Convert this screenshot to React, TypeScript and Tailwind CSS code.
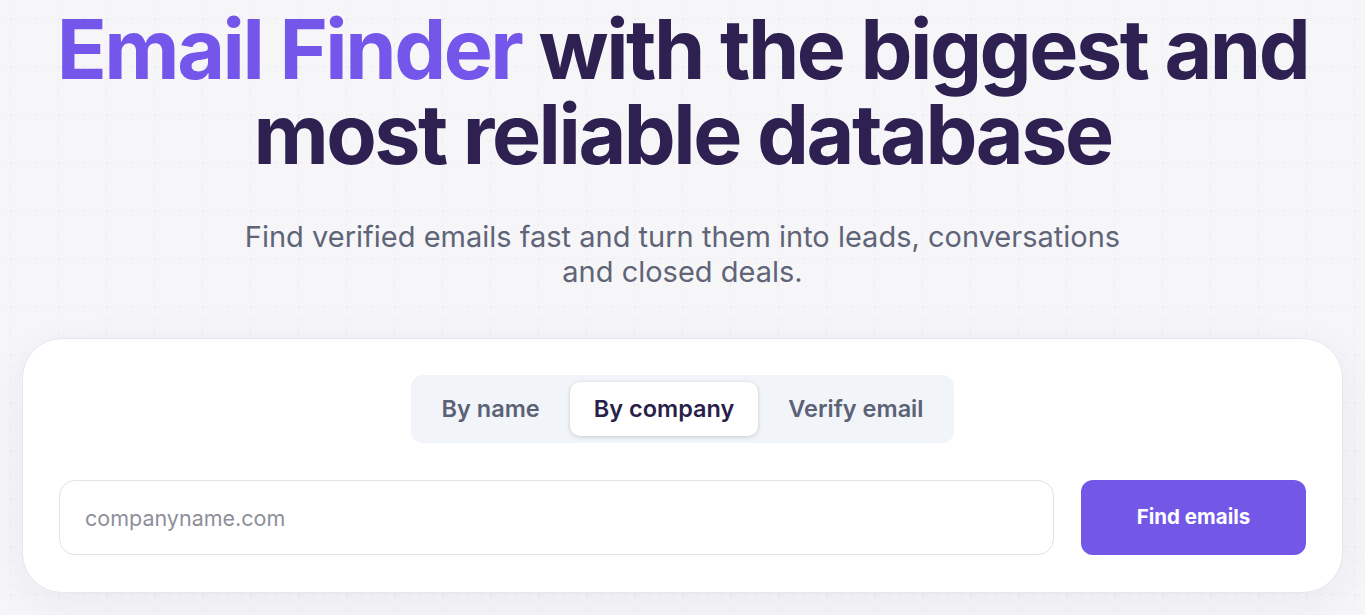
import { useState } from 'react'

const tabs = ['By name', 'By company', 'Verify email']

function GridBackdrop() {
  // faint dashed grid behind the hero
  return (
    <svg className="pointer-events-none absolute inset-0 h-full w-full" aria-hidden="true">
      <defs>
        <pattern id="grid" x="10" y="18" width="48" height="48" patternUnits="userSpaceOnUse">
          <path d="M0 0H48" stroke="#e2e2ef" strokeWidth="1" strokeDasharray="5 7" fill="none" />
          <path d="M0 0V48" stroke="#e2e2ef" strokeWidth="1" strokeDasharray="5 7" fill="none" />
        </pattern>
      </defs>
      <rect width="100%" height="100%" fill="url(#grid)" />
    </svg>
  )
}

export default function App() {
  const [active, setActive] = useState(1)

  return (
    <div
      className="relative min-h-screen overflow-hidden bg-[#f6f6f9]"
      style={{ fontFamily: 'Inter, "Noto Sans", sans-serif' }}
    >
      <GridBackdrop />
      <div className="relative flex flex-col items-center px-[22px] pt-[7px]">
        <h1 className="text-center text-[82.5px] font-bold leading-[85px] tracking-[-0.03em] text-[#2e2151]">
          <span className="text-[#7457ea]">Email Finder</span> with the biggest and
          <br />
          most reliable database
        </h1>
        <p className="mt-[42px] max-w-[900px] text-center text-[29px] leading-[35px] text-[#5f6577]">
          Find verified emails fast and turn them into leads, conversations and closed deals.
        </p>

        <div className="mt-[49px] flex w-full flex-col items-center gap-[37px] rounded-[40px] border border-[#e6e6ee] bg-white px-9 pt-9 pb-[37px] shadow-[0_10px_40px_rgba(40,30,90,0.06)]">
          <div className="flex gap-[6px] rounded-xl bg-[#f1f4f9] p-[7px]">
            {tabs.map((t, i) => (
              <button
                key={t}
                onClick={() => setActive(i)}
                className={
                  i === active
                    ? 'h-[54px] rounded-[10px] bg-white px-6 text-[23.5px] font-semibold text-[#2a1f4b] shadow-[0_1px_4px_rgba(0,0,0,0.18)]'
                    : 'h-[54px] rounded-[10px] px-6 text-[23.5px] font-semibold text-[#5b6275]'
                }
              >
                {t}
              </button>
            ))}
          </div>

          <div className="flex w-full gap-[27px]">
            <input
              type="text"
              placeholder="companyname.com"
              className="h-[75px] flex-1 rounded-2xl border border-[#e2e2e8] bg-white px-[25px] text-[21.5px] text-[#2a1f4b] outline-none placeholder:text-[#8d8f9a]"
            />
            <button className="h-[75px] w-[225px] rounded-xl bg-[#7358e8] text-[20.5px] font-bold text-white">
              Find emails
            </button>
          </div>
        </div>
      </div>
    </div>
  )
}
